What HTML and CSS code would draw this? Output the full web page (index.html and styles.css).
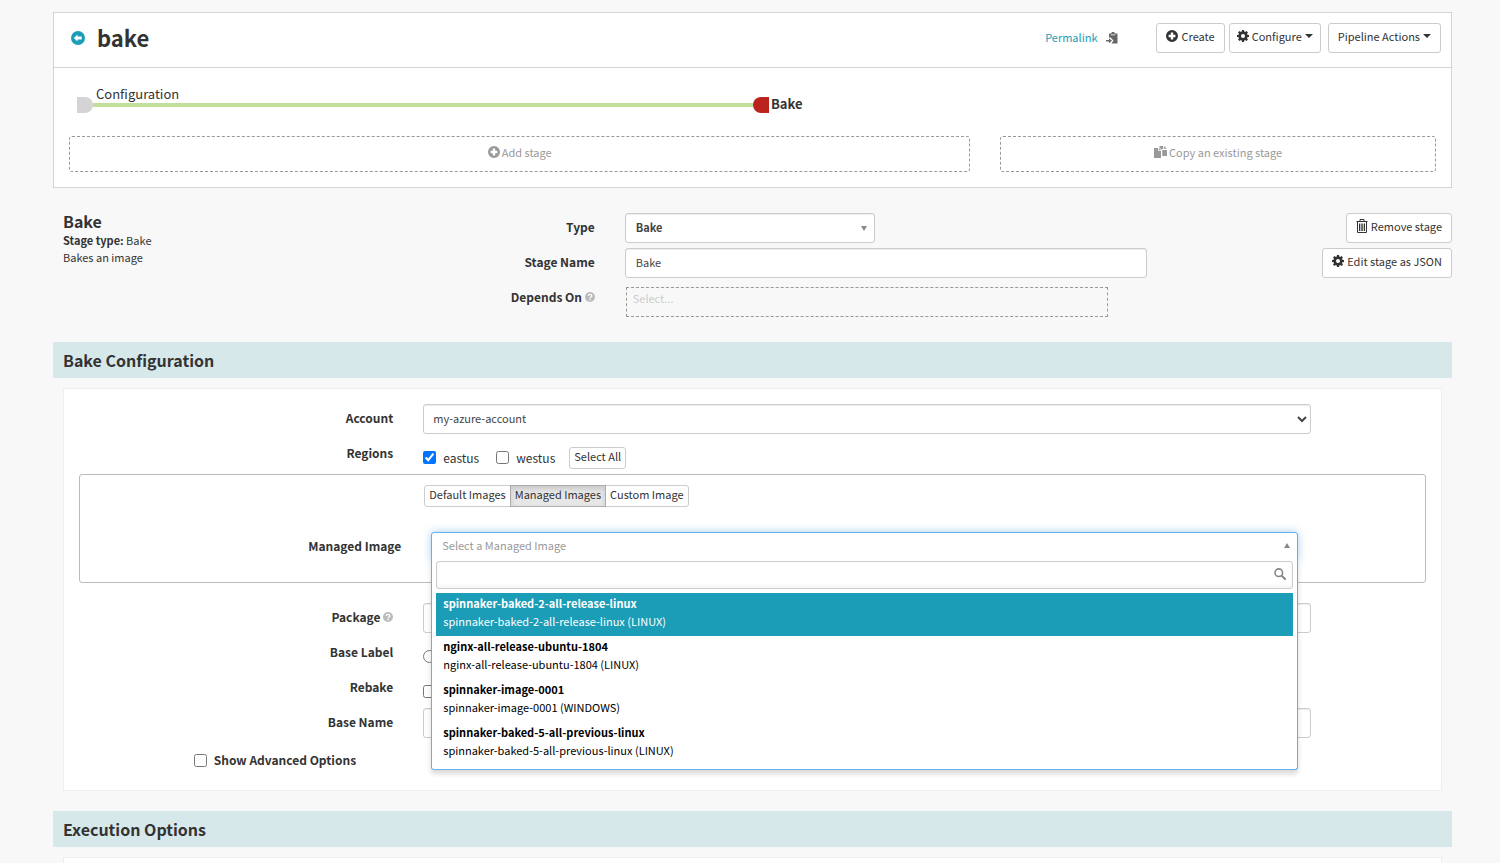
FILE: index.html
```html
<!DOCTYPE html>
<html lang="en">
<head>
  <meta charset="UTF-8">
  <meta name="viewport" content="width=device-width, initial-scale=1.0">
  <title>bake</title>
  <link rel="stylesheet" href="styles.css">
</head>
<body>
  <svg class="sprite" aria-hidden="true">
    <symbol id="i-plus" viewBox="0 0 12 12">
      <path fill-rule="evenodd" d="M6 0a6 6 0 1 1 0 12A6 6 0 0 1 6 0zM4.8 2.6v2.2H2.6v2.4h2.2v2.2h2.4V7.2h2.2V4.8H7.2V2.6z"/>
    </symbol>
    <symbol id="i-back" viewBox="0 0 14 14">
      <path fill-rule="evenodd" d="M7 0a7 7 0 1 1 0 14A7 7 0 0 1 7 0zM2.8 7l3.7 3.4V8.4h4.2V5.6H6.5v-2z"/>
    </symbol>
    <symbol id="i-cog" viewBox="0 0 12 12">
      <path fill-rule="evenodd" d="M5 0h2l.3 1.6.9.4L9.5 1 11 2.5l-1 1.3.4.9L12 5v2l-1.6.3-.4.9 1 1.3L9.5 11l-1.3-1-.9.4L7 12H5l-.3-1.6-.9-.4-1.3 1L1 9.5l1-1.3-.4-.9L0 7V5l1.6-.3.4-.9-1-1.3L2.5 1l1.3 1 .9-.4zM6 4a2 2 0 1 0 0 4 2 2 0 0 0 0-4z"/>
    </symbol>
    <symbol id="i-trash" viewBox="0 0 12 14">
      <path fill="none" stroke="currentColor" d="M.5 2.5h11M4 2.5v-2h4v2M1.500 3v10.500h9V3M3.500 4.500v7.500M5.200 4.500v7.500M6.800 4.500v7.500M8.500 4.500v7.500"/>
    </symbol>
    <symbol id="i-copy" viewBox="0 0 13 12">
      <path d="M0 2h4.200v3H7v7H0zM5 2l2.200 2.200H5zM5.500 0H9v3H8v1L5.500 1.500zM9.800 0v2.800H13zM8.200 4H13v6H8.200z"/>
    </symbol>
    <symbol id="i-paste" viewBox="0 0 12 12">
      <path d="M3 1.500h2L6 0h2l1 1.500h2.500V11.500H5.500L7.500 8.500 4.500 5.500H3zM0 8h3V6.200L6 8.700l-3 2.500V9.400H0z"/>
      <path d="M4.800 2.800h4.400" stroke="#fff" stroke-width=".8"/>
    </symbol>
    <symbol id="i-help" viewBox="0 0 10 10">
      <circle cx="5" cy="5" r="5"/>
      <path fill="none" stroke="#fff" stroke-width="1.3" d="M3.300 3.900c0-2 3.500-2 3.500 0C6.800 5 5.100 5 5.100 6.200M5.100 7v1.200"/>
    </symbol>
    <symbol id="i-search" viewBox="0 0 12 12">
      <circle cx="4.800" cy="4.700" r="3.800" fill="none" stroke="currentColor" stroke-width="1.6"/>
      <path stroke="currentColor" stroke-width="2" stroke-linecap="round" d="M8 8l3 3"/>
    </symbol>
  </svg>

  <div class="page">
    <section class="pipeline">
      <header class="pipeline-header">
        <a class="back" href="#" aria-label="Back to pipelines"><svg width="14" height="14"><use href="#i-back"/></svg></a>
        <h1>bake</h1>
        <a class="permalink" href="#">Permalink</a>
        <button class="copy-link" type="button" aria-label="Copy permalink"><svg width="12" height="12"><use href="#i-paste"/></svg></button>
        <div class="header-actions">
          <button class="btn" type="button"><svg width="12" height="12"><use href="#i-plus"/></svg>Create</button>
          <button class="btn btn-configure" type="button"><svg width="12" height="12"><use href="#i-cog"/></svg>Configure<span class="caret"></span></button>
          <button class="btn btn-actions" type="button">Pipeline Actions<span class="caret"></span></button>
        </div>
      </header>

      <div class="graph">
        <div class="graph-stage">
          <span class="node node-config"></span>
          <span class="link"></span>
          <span class="graph-label">Configuration</span>
        </div>
        <div class="graph-stage">
          <span class="node node-bake"></span>
          <strong>Bake</strong>
        </div>
      </div>

      <div class="add-row">
        <div><button class="add-btn" type="button"><svg width="12" height="12"><use href="#i-plus"/></svg>Add stage</button></div>
        <div><button class="add-btn" type="button"><svg width="13" height="12"><use href="#i-copy"/></svg>Copy an existing stage</button></div>
      </div>
    </section>

    <section class="stage">
      <div class="stage-summary">
        <h2>Bake</h2>
        <p><b>Stage type:</b> Bake</p>
        <p>Bakes an image</p>
      </div>
      <div class="stage-form">
        <div class="stage-row">
          <label for="stageType">Type</label>
          <div class="type-select">
            <select id="stageType" class="control">
              <option>Bake</option>
            </select>
          </div>
        </div>
        <div class="stage-row">
          <label for="stageName">Stage Name</label>
          <input type="text" id="stageName" class="control" value="Bake">
        </div>
        <div class="stage-row">
          <label for="dependsOn">Depends On <svg class="help" width="10" height="10"><use href="#i-help"/></svg></label>
          <input type="text" id="dependsOn" class="depends" placeholder="Select...">
        </div>
      </div>
      <div class="stage-actions">
        <button class="btn" type="button"><svg width="12" height="14"><use href="#i-trash"/></svg>Remove stage</button>
        <button class="btn" type="button"><svg width="12" height="12"><use href="#i-cog"/></svg>Edit stage as JSON</button>
      </div>
    </section>

    <h3 class="section-title">Bake Configuration</h3>
    <section class="panel">
      <div class="row">
        <label class="row-label" for="account">Account</label>
        <div class="row-field">
          <select id="account" class="control">
            <option>my-azure-account</option>
          </select>
        </div>
      </div>
      <div class="row">
        <span class="row-label">Regions</span>
        <div class="row-field regions">
          <label><input type="checkbox" checked>eastus</label>
          <label><input type="checkbox">westus</label>
          <button class="btn btn-xs" type="button">Select All</button>
        </div>
      </div>

      <div class="image-box">
        <div class="tabs">
          <button class="btn btn-xs" type="button">Default Images</button>
          <button class="btn btn-xs active" type="button">Managed Images</button>
          <button class="btn btn-xs" type="button">Custom Image</button>
        </div>
        <div class="row">
          <label class="row-label" for="managedImage">Managed Image</label>
          <div class="row-field">
            <div class="picker">
              <button id="managedImage" class="picker-toggle" type="button" aria-expanded="true">Select a Managed Image<span class="arrow-up"></span></button>
              <div class="picker-menu">
                <div class="picker-search">
                  <input type="text" aria-label="Search images">
                  <svg width="12" height="12"><use href="#i-search"/></svg>
                </div>
                <ul>
                  <li class="selected"><b>spinnaker-baked-2-all-release-linux</b>spinnaker-baked-2-all-release-linux (LINUX)</li>
                  <li><b>nginx-all-release-ubuntu-1804</b>nginx-all-release-ubuntu-1804 (LINUX)</li>
                  <li><b>spinnaker-image-0001</b>spinnaker-image-0001 (WINDOWS)</li>
                  <li><b>spinnaker-baked-5-all-previous-linux</b>spinnaker-baked-5-all-previous-linux (LINUX)</li>
                </ul>
              </div>
            </div>
          </div>
        </div>
      </div>

      <div class="row">
        <label class="row-label" for="package">Package <svg class="help" width="10" height="10"><use href="#i-help"/></svg></label>
        <div class="row-field"><input type="text" id="package" class="control"></div>
      </div>
      <div class="row">
        <label class="row-label" for="baseLabel">Base Label</label>
        <div class="row-field tick"><input type="radio" id="baseLabel"></div>
      </div>
      <div class="row">
        <label class="row-label" for="rebake">Rebake</label>
        <div class="row-field tick"><input type="checkbox" id="rebake"></div>
      </div>
      <div class="row">
        <label class="row-label" for="baseName">Base Name</label>
        <div class="row-field"><input type="text" id="baseName" class="control"></div>
      </div>
      <label class="advanced"><input type="checkbox">Show Advanced Options</label>
    </section>

    <h3 class="section-title">Execution Options</h3>
    <section class="panel panel-last"></section>
  </div>
</body>
</html>
```

FILE: styles.css
```css
* {
  box-sizing: border-box;
}
body {
  margin: 0;
  background-color: #f8f8f8;
  color: #333;
  font-family: "Noto Sans CJK JP", "Open Sans", sans-serif;
  font-size: 11px;
  line-height: 18px;
}
button, input, select {
  font: inherit;
  color: inherit;
  margin: 0;
}
button {
  cursor: pointer;
}
svg {
  fill: currentColor;
  flex: none;
}
h1, h2, h3, p, ul {
  margin: 0;
  padding: 0;
}
.sprite {
  display: none;
}
.page {
  display: flex;
  flex-direction: column;
  min-height: 100vh;
  padding: 12px 48px 0 53px;
}

/* buttons and inputs */
.btn {
  display: inline-flex;
  align-items: center;
  gap: 3px;
  height: 30px;
  padding: 0 9px 4px;
  background-color: #fff;
  border: 1px solid #ccc;
  border-radius: 3px;
  white-space: nowrap;
}
.btn-xs {
  height: 22px;
  padding: 0 4px 4px;
}
.caret {
  border: 4px solid transparent;
  border-top-color: currentColor;
  border-bottom: 0;
}
.control {
  display: block;
  width: 100%;
  height: 30px;
  padding: 0 10px 2px;
  background-color: #fff;
  border: 1px solid #ccc;
  border-radius: 3px;
  box-shadow: inset 0 1px 1px rgba(0, 0, 0, 0.075);
  color: #444;
}
select.control {
  padding: 0 0 2px 5px;
}
input[type="checkbox"], input[type="radio"] {
  width: 13px;
  height: 13px;
  flex: none;
}
.help {
  color: #bbb;
}

/* pipeline header and graph */
.pipeline {
  background-color: #fff;
  border: 1px solid #d4d4d4;
}
.pipeline-header {
  display: flex;
  align-items: center;
  height: 55px;
  padding: 0 10px 4px 17px;
  border-bottom: 1px solid #d4d4d4;
}
.pipeline-header h1 {
  margin: 0 auto 0 12px;
  padding-bottom: 2px;
  font-size: 22px;
  font-weight: 600;
  line-height: 30px;
}
.back {
  display: flex;
  color: #1b9cb7;
}
.permalink {
  padding-bottom: 2px;
  color: #1b9cb7;
  text-decoration: none;
}
.copy-link {
  display: flex;
  margin: 0 38px 0 9px;
  padding: 0;
  border: 0;
  background: none;
  color: #666;
}
.header-actions {
  display: flex;
  gap: 4px;
}
.btn-configure {
  padding: 0 7px 4px;
}
.btn-actions {
  margin-left: 3px;
}
.graph {
  display: flex;
  padding: 29px 22px 23px 23px;
}
.graph-stage {
  position: relative;
  display: flex;
  flex: 1;
  align-items: center;
  height: 16px;
  font-size: 13px;
}
.graph-stage strong {
  margin-left: 2px;
  padding-bottom: 2px;
}
.node {
  width: 16px;
  height: 16px;
}
.node-config {
  background-color: #d4d4d4;
  border-radius: 0 8px 8px 0;
}
.node-bake {
  background-color: #bb231e;
  border-radius: 8px 0 0 8px;
}
.link {
  flex: 1;
  height: 4px;
  background-color: #bfdf9b;
}
.graph-label {
  position: absolute;
  left: 19px;
  bottom: 10px;
}
.add-row {
  display: grid;
  grid-template-columns: 2fr 1fr;
  padding-bottom: 15px;
}
.add-row > div {
  padding: 0 15px;
}
.add-btn {
  display: flex;
  align-items: center;
  justify-content: center;
  gap: 2px;
  width: 100%;
  height: 36px;
  padding-bottom: 6px;
  background: none;
  border: 1px dashed #999;
  border-radius: 3px;
  color: #999;
}

/* stage details */
.stage {
  display: grid;
  grid-template-columns: 25% 1fr auto;
  padding-top: 25px;
}
.stage-summary {
  padding-left: 10px;
  line-height: 17px;
}
.stage-summary h2 {
  margin-bottom: 2px;
  font-size: 16px;
  font-weight: 600;
  line-height: 17px;
}
.stage-row {
  display: flex;
  gap: 30px;
  min-height: 35px;
}
.stage-row label {
  width: 192px;
  padding-top: 5px;
  font-size: 12px;
  font-weight: bold;
  text-align: right;
}
.stage-row input.control {
  width: 522px;
}
.type-select {
  position: relative;
  width: 250px;
}
.type-select select {
  appearance: none;
  padding: 0 10px 2px;
  font-weight: bold;
}
.type-select::after {
  content: "";
  position: absolute;
  right: 8px;
  top: 13px;
  border: 3px solid transparent;
  border-top: 5px solid #888;
  border-bottom: 0;
}
.stage-row .depends {
  width: 482px;
  height: 30px;
  margin: 4px 0 0 1px;
  padding: 0 6px 8px;
  background: none;
  border: 1px dashed #999;
}
.depends::placeholder {
  color: #ccc;
}
.stage-actions {
  display: flex;
  flex-direction: column;
  align-items: flex-end;
  gap: 5px;
}

/* sections */
.section-title {
  margin-top: 20px;
  padding: 0 10px;
  background-color: #d7e8eb;
  font-size: 16px;
  font-weight: 600;
  line-height: 36px;
}
.stage + .section-title {
  margin-top: 24px;
}
.panel {
  margin: 10px 10px 0;
  padding: 15px 0 21px;
  background-color: #fff;
  border: 1px solid #eee;
}
.panel-last {
  flex: 1;
  padding: 0;
  border-bottom: 0;
}
.row {
  display: flex;
  min-height: 35px;
}
.row-label {
  width: 25%;
  padding: 5px 15px 0;
  font-size: 12px;
  font-weight: bold;
  text-align: right;
}
.row-field {
  width: 66.6667%;
  padding: 0 15px;
}
.regions {
  display: flex;
  align-items: center;
  height: 35px;
  padding-top: 2px;
  font-size: 12px;
}
.regions label {
  display: flex;
  align-items: center;
  gap: 7px;
  margin-right: 17px;
}
.regions .btn {
  margin-left: -3px;
  font-size: 11px;
}
.tick {
  padding-top: 12px;
}
.tick input {
  display: block;
}
.image-box {
  height: 109px;
  margin: 0 15px 20px;
  padding-top: 10px;
  border: 1px solid #bbb;
  border-radius: 3px;
}
.tabs {
  display: flex;
  margin: 0 0 25px 25%;
  padding-left: 8px;
}
.tabs .btn {
  border-radius: 0;
}
.tabs .btn + .btn {
  margin-left: -1px;
}
.tabs .btn:first-child {
  border-radius: 3px 0 0 3px;
}
.tabs .btn:last-child {
  border-radius: 0 3px 3px 0;
}
.tabs .active {
  position: relative;
  background-color: #e6e6e6;
  border-color: #adadad;
  box-shadow: inset 0 3px 5px rgba(0, 0, 0, 0.125);
}

/* managed image dropdown */
.picker {
  position: relative;
}
.picker-toggle {
  display: flex;
  align-items: center;
  justify-content: space-between;
  width: 100%;
  height: 30px;
  padding: 0 7px 4px 10px;
  background-color: #fff;
  border: 1px solid #66afe9;
  border-radius: 3px 3px 0 0;
  box-shadow: 0 0 8px rgba(102, 175, 233, 0.6);
  color: #999;
}
.arrow-up {
  border: 3px solid transparent;
  border-bottom: 5px solid #888;
  border-top: 0;
}
.picker-menu {
  position: absolute;
  z-index: 10;
  top: 27px;
  left: 0;
  right: 0;
  padding: 2px 4px 4px;
  background-color: #fff;
  border: 1px solid #66afe9;
  border-top: 0;
  border-radius: 0 0 3px 3px;
  box-shadow: 0 4px 5px rgba(0, 0, 0, 0.15);
}
.picker-search {
  position: relative;
  margin-bottom: 4px;
}
.picker-search input {
  display: block;
  width: 100%;
  height: 28px;
  padding: 0 30px 0 6px;
  background-color: #fff;
  border: 1px solid #ccc;
  border-radius: 3px;
  box-shadow: inset 0 -2px 4px rgba(0, 0, 0, 0.05);
}
.picker-search svg {
  position: absolute;
  right: 7px;
  top: 7px;
  color: #888;
}
.picker-menu ul {
  list-style: none;
}
.picker-menu li {
  height: 43px;
  padding: 1px 7px;
  color: #000;
}
.picker-menu li b {
  display: block;
}
.picker-menu .selected {
  background-color: #1b9cb7;
  color: #fff;
}
.advanced {
  display: flex;
  align-items: center;
  gap: 7px;
  width: fit-content;
  margin-left: 8.3333%;
  padding: 8px 15px 0;
  font-size: 12px;
  font-weight: bold;
}
```
